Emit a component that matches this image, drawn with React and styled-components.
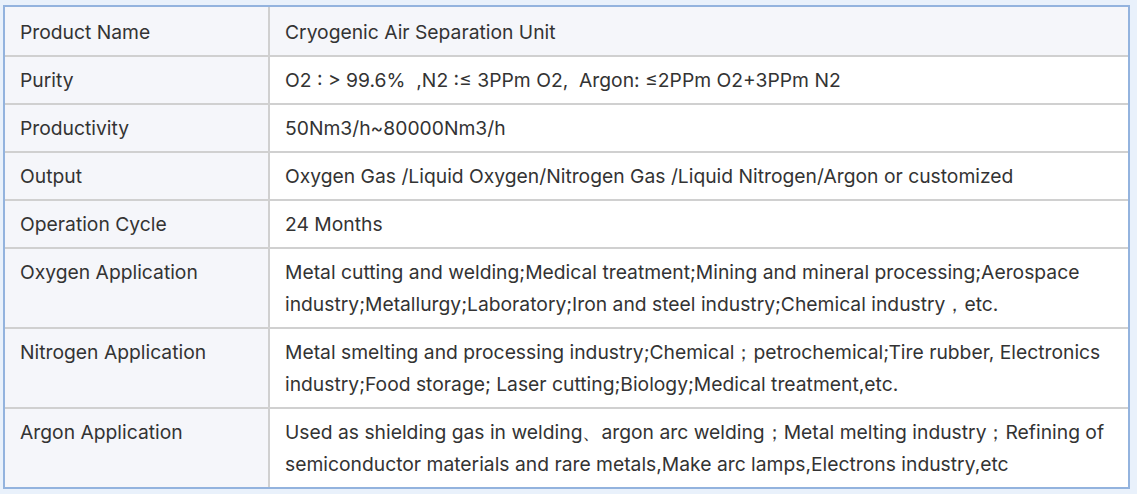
import React from 'react';
import styled, { createGlobalStyle } from 'styled-components';

const GlobalStyle = createGlobalStyle`
  * { box-sizing: border-box; }
  body {
    margin: 0;
    background: #e9f1fb;
    font-family: Inter, Roboto, "Liberation Sans", sans-serif;
  }
`;

const Page = styled.div`
  padding: 5px 7px 5px 3px;
`;

const Frame = styled.div`
  border: 2px solid #93b3de;
  background: #fff;
`;

const Table = styled.table`
  width: 100%;
  border-collapse: separate;
  border-spacing: 0;
  font-size: 19.3px;
  color: #333;
`;

const Row = styled.tr`
  &:first-child td { padding-top: 9px; }
  &:last-child td { border-bottom: none; }
`;

const Label = styled.td`
  width: 265px;
  padding: 7px 15px;
  line-height: 32px;
  vertical-align: top;
  background: #f5f6fa;
  border-right: 2px solid #d0d0d0;
  border-bottom: 2px solid #d0d0d0;
`;

const Value = styled.td`
  padding: 7px 15px;
  line-height: 32px;
  vertical-align: top;
  white-space: pre-wrap;
  background: ${p => (p.$shaded ? '#f5f6fa' : '#fff')};
  border-bottom: 2px solid #d0d0d0;
`;

const rows = [
  ['Product Name', 'Cryogenic Air Separation Unit'],
  ['Purity', 'O2 : > 99.6%  ,N2 :≤ 3PPm O2,  Argon: ≤2PPm O2+3PPm N2'],
  ['Productivity', '50Nm3/h~80000Nm3/h'],
  ['Output', 'Oxygen Gas /Liquid Oxygen/Nitrogen Gas /Liquid Nitrogen/Argon or customized'],
  ['Operation Cycle', '24 Months'],
  ['Oxygen Application', 'Metal cutting and welding;Medical treatment;Mining and mineral processing;Aerospace industry;Metallurgy;Laboratory;Iron and steel industry;Chemical industry，etc.'],
  ['Nitrogen Application', 'Metal smelting and processing industry;Chemical；petrochemical;Tire rubber, Electronics industry;Food storage; Laser cutting;Biology;Medical treatment,etc.'],
  ['Argon Application', 'Used as shielding gas in welding、argon arc welding；Metal melting industry；Refining of semiconductor materials and rare metals,Make arc lamps,Electrons industry,etc'],
];

export default function App() {
  return (
    <Page>
      <GlobalStyle />
      <Frame>
        <Table>
          <tbody>
            {rows.map(([k, v], i) => (
              <Row key={k}>
                <Label>{k}</Label>
                <Value $shaded={i === 0}>{v}</Value>
              </Row>
            ))}
          </tbody>
        </Table>
      </Frame>
    </Page>
  );
}
